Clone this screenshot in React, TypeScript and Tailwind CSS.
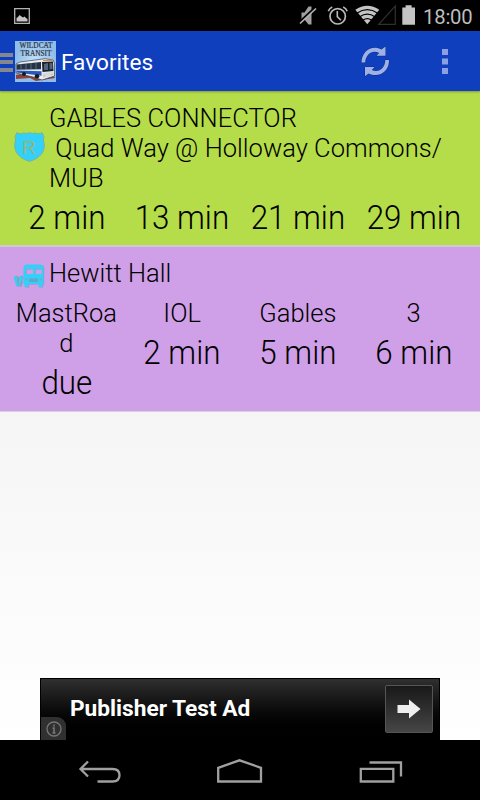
import type { ReactNode } from 'react';

type Arrival = { route?: string[]; time: string };

const gablesArrivals: Arrival[] = [
  { time: '2 min' },
  { time: '13 min' },
  { time: '21 min' },
  { time: '29 min' },
];

const hewittArrivals: Arrival[] = [
  { route: ['MastRoa', 'd'], time: 'due' },
  { route: ['IOL'], time: '2 min' },
  { route: ['Gables'], time: '5 min' },
  { route: ['3'], time: '6 min' },
];

function StatusBar() {
  return (
    <div className="flex h-[31px] shrink-0 items-center bg-black">
      <svg className="ml-[14px]" width="16" height="16" viewBox="0 0 16 16">
        <path d="M.7.7h14.6v14.6H.7z" fill="none" stroke="#b4b4b4" strokeWidth="1.3" />
        <path d="M2.5 13.5V10l1.5-1 1.5-2 2 1.5 1.5 1 1.5-1L12 10l1.5 1v2.5z" fill="#c4c4c4" />
      </svg>
      <svg className="ml-auto" width="132" height="31" viewBox="298 0 132 31">
        {/* muted ringer */}
        <path d="M301.5 12.5h3l4-6h3v18h-3l-4-5h-3z" fill="#a0a0a0" />
        <path d="M299.5 22L315.5 7" stroke="#000" strokeWidth="2" />
        <path d="M300 23.5L316 8.5" stroke="#b4b4b4" strokeWidth="1.6" />
        {/* alarm */}
        <circle cx="337.7" cy="16.3" r="7.7" fill="none" stroke="#b9b9b9" strokeWidth="1.7" />
        <path d="M337.3 11v5.6l3.6 3.6M328.3 11.3q1-3 4-4.3M347.2 11.3q-1-3-4-4.3" fill="none" stroke="#b9b9b9" strokeWidth="1.6" />
        {/* wifi */}
        <path d="M367.3 24.3L355.3 9.8q12-8 24 0z" fill="#c4c4c4" />
        <path d="M356.8 13.2q10.5-7 21 0M359.8 16.7q7.5-5 15 0M362.9 20.2q4.4-3 8.8 0" fill="none" stroke="#000" strokeWidth="1.3" />
        <path d="M395.3 6v18.3h-16.6z" fill="none" stroke="#303030" strokeWidth="1.2" />
        {/* battery */}
        <path d="M402.3 7.5h3.3V5.3h6v2.2h3.4v17.3h-12.7z" fill="#c4c4c4" />
      </svg>
      <span className="-ml-[7px] w-[57px] pt-[2px] text-[20.3px] leading-[30px] tracking-[-0.2px] text-[#bdbdbd]">18:00</span>
    </div>
  );
}

function AppIcon() {
  return (
    <svg width="41" height="41" viewBox="0 0 41 41">
      <defs>
        <radialGradient id="sky">
          <stop offset="0" stopColor="#c6e2f7" />
          <stop offset="1" stopColor="#8fbce9" />
        </radialGradient>
      </defs>
      <rect width="41" height="41" fill="url(#sky)" />
      <g fill="#262d3a" stroke="#262d3a" strokeWidth=".15" fontFamily="Liberation Serif, serif" fontSize="7.3">
        <text x="4.5" y="7" textLength="33" lengthAdjust="spacingAndGlyphs">WILDCAT</text>
        <text x="5.5" y="15.2" textLength="31" lengthAdjust="spacingAndGlyphs">TRANSIT</text>
      </g>
      <path d="M1 34l13-3 25 4 1 2-19 3-6-3-14 1z" fill="#8d4137" />
      <path d="M1 23l4-2 25-3.3 8 1.3 1.5 3v13L27 39l-9-3L1 32z" fill="#e8edf5" stroke="#39404b" strokeWidth=".7" />
      <path d="M1.5 23.5L26 21v7.2l-24.5.5z" fill="#263345" />
      <path d="M6 23v5.5M11 22.5v6M16 22v6.5M21 21.5v6.7" stroke="#8291a5" strokeWidth=".6" />
      <path d="M1.5 29.5l25 .8v4.5l-25-3.2z" fill="#2559be" />
      <path d="M27 21l11-.5.5 9.5-11 1z" fill="#17212e" />
      <path d="M29 23l4-1v7h-4zM34.5 22l3 .3V28l-3 .5z" fill="#53657a" />
      <path d="M28 19.5l9.5-.2" stroke="#d98635" strokeWidth="1" />
      <path d="M27.5 32l11-1.2v3.8L28 37z" fill="#d4dae4" />
      <circle cx="9" cy="33" r="2" fill="#161b23" />
      <circle cx="22" cy="35.3" r="2.3" fill="#161b23" />
      <path d="M28 35l1.8-.3M36 33.5l1.8-.3" stroke="#f0bb46" strokeWidth="1.2" />
    </svg>
  );
}

function ActionBar() {
  return (
    <header className="flex h-[60px] shrink-0 items-center bg-[#0f3fbd] shadow-[0_1px_2px_rgba(0,0,0,0.3)]">
      <div className="mr-[2px] flex w-[13px] flex-col gap-[3.5px] pt-[2px]">
        <i className="h-[4px] bg-[#83878f]" />
        <i className="h-[4px] bg-[#83878f]" />
        <i className="h-[4px] bg-[#83878f]" />
      </div>
      <AppIcon />
      <h1 className="ml-[5px] pt-[3px] text-[22.6px] leading-[30px] text-white">Favorites</h1>
      <svg className="ml-auto" width="96" height="36" viewBox="358 43 96 36">
        <g stroke="#0a2c8c" strokeWidth="1" fill="#9fb0e4" paintOrder="stroke">
          <path d="M361.5 62.5C361.7 51 372 44.5 381.5 49.5L385.5 46.5V55.8H376.5L379.2 53C372.5 49 365.5 54.5 365.2 62.5z" />
          <path d="M389 60C389.5 71 379.5 78.5 368.5 73.5L365 76.3V67H374.5L371.8 70C378.5 73.5 385.2 68 385.3 60z" />
        </g>
        <path d="M442 49h6v6h-6zM442 58.5h6v6h-6zM442 68h6v6h-6z" fill="#8b9fe2" />
      </svg>
      <div className="w-[26px]" />
    </header>
  );
}

function RouteIcon() {
  return (
    <svg className="mb-[2px]" width="31" height="30" viewBox="0 0 31 30">
      <path
        d="M3 .6C5 2 7 2.2 9.5 .9C11.5 1.8 13.5 1.6 15.5 .6C17.5 1.6 19.5 1.8 21.5 .9C24 2.2 26 2 28 .6L30 4.5C28.5 8 30.5 10 30.3 14.5C29.8 22 23 27.5 15.5 29.3C8 27.5 1.2 22 .7 14.5C.5 10 2.5 8 1 4.5z"
        fill="#35d0fa"
        stroke="#73b5a0"
        strokeWidth="1"
      />
      <text x="8" y="22" className="font-['Liberation_Sans',sans-serif] text-[19px] font-normal" fill="#8fb878">R</text>
    </svg>
  );
}

function StopIcon() {
  return (
    <svg className="mt-[5px]" width="31" height="24" viewBox="0 0 31 24">
      <g fill="#8d9db7" transform="translate(.7 .6)">
        <path
          fillRule="evenodd"
          d="M9.5 4Q9.5 .5 13 .5h13q3.5 0 3.5 3.5V20h-1v3h-4v-3H14.5v3h-4v-3h-1zM12 5v5h7V5zM21 5v5h6.5V5z"
        />
        <path d="M0 13l2-2 2 2 1-1 3-1 1 3-2 8H2l-1-5z" />
      </g>
      <path
        fill="#35d0fa"
        fillRule="evenodd"
        d="M9.5 4Q9.5 .5 13 .5h13q3.5 0 3.5 3.5V20h-1v3h-4v-3H14.5v3h-4v-3h-1zM12 5v5h7V5zM21 5v5h6.5V5z"
      />
      <path d="M15 14.5h9V18h-9z" fill="#5caac9" />
      <path d="M11 14.5h2.5v2H11zM25.5 14.5H28v2h-2.5z" fill="#75a9c8" />
      <path d="M0 13l1.5-1.5L3 13v3l1 6H2l-1-5-1-1zM5.5 12L8 12.5l1 4-2 1-1 5H4.5z" fill="#35d0fa" />
    </svg>
  );
}

function FavoriteRow({ icon, title, arrivals, className }: {
  icon: ReactNode;
  title: string[];
  arrivals: Arrival[];
  className: string;
}) {
  return (
    <section className={className}>
      <div className="flex items-center pl-[14px]">
        {icon}
        <h2 className="ml-[4px] text-[25.5px] leading-[30px] tracking-[0.03px] whitespace-pre">
          {title.map((line) => <div key={line}>{line}</div>)}
        </h2>
      </div>
      <div className="grid grid-cols-4 px-[8.5px] text-center">
        {arrivals.map((arrival, i) => (
          <div key={i}>
            {arrival.route && (
              <div className="pt-[10px] text-[25.5px] leading-[30px]">
                {arrival.route.map((part) => <div key={part}>{part}</div>)}
              </div>
            )}
            <div className="scale-x-[0.95] pt-[6px] text-[33px] leading-[38px]">{arrival.time}</div>
          </div>
        ))}
      </div>
    </section>
  );
}

function AdBanner() {
  return (
    <aside className="mx-auto mt-auto flex h-[62px] w-[400px] shrink-0 items-start border border-b-0 border-black bg-linear-to-b from-[#303030] to-black">
      <div className="flex h-full w-[25px] items-end">
        <div className="flex h-[23px] w-[25px] items-center justify-center rounded-tr-[9px] bg-[#303030]">
          <svg width="16" height="16" viewBox="0 0 16 16" fill="none" stroke="#777">
            <circle cx="8" cy="8" r="7" strokeWidth="1.3" />
            <path d="M8 3.5v2M6.5 7H8v5m-1.5 0h3" strokeWidth="1.6" />
          </svg>
        </div>
      </div>
      <span className="ml-[4px] pt-[15px] text-[22.7px] leading-[30px] font-bold whitespace-nowrap text-white">Publisher Test Ad</span>
      <button className="mt-[6px] mr-[6px] ml-auto flex h-[48px] w-[48px] items-center justify-center rounded-[2px] border border-[#555] bg-linear-to-b from-[#191919] to-[#464646]">
        <svg width="24" height="22" viewBox="0 0 24 22">
          <path d="M.5 7H12V1.5L23.5 11 12 20.5V15H.5z" fill="#eee" />
        </svg>
      </button>
    </aside>
  );
}

function NavigationBar() {
  return (
    <nav className="flex h-[60px] shrink-0 items-center justify-center bg-black">
      <svg width="326" height="30" viewBox="77.5 755 326 30" fill="none" stroke="#a0a0a0" strokeWidth="2.3">
        <path d="M88.5 761.5L81 769l7.5 7.5M81 769h32q7 0 7 6.2t-7 6.3H98" />
        <path d="M218.7 781.5V767.8L240 760.3l21.5 7.5v13.7z" />
        <path d="M361.3 768.8h32.5v12.7h-32.5zM370 762.5h31.5v14" />
      </svg>
    </nav>
  );
}

export default function App() {
  return (
    <div className="flex h-[800px] w-[480px] flex-col overflow-hidden bg-black font-['Roboto',sans-serif]">
      <StatusBar />
      <div className="z-10 shrink-0">
        <ActionBar />
      </div>
      <main className="flex min-h-0 flex-1 flex-col bg-linear-to-b from-[#ececec] to-white">
        <FavoriteRow
          icon={<RouteIcon />}
          title={['GABLES CONNECTOR', ' Quad Way @ Holloway Commons/', 'MUB']}
          arrivals={gablesArrivals}
          className="h-[154px] shrink-0 bg-[#b5dc49] pt-[12px] font-light text-black"
        />
        <div className="h-[2px] shrink-0 bg-[#cecad0]" />
        <FavoriteRow
          icon={<StopIcon />}
          title={['Hewitt Hall']}
          arrivals={hewittArrivals}
          className="h-[164px] shrink-0 bg-[#cf9fe7] pt-[11px] font-light text-black"
        />
        <div className="h-px shrink-0 bg-[#d7d3d9]" />
        <AdBanner />
      </main>
      <NavigationBar />
    </div>
  );
}
